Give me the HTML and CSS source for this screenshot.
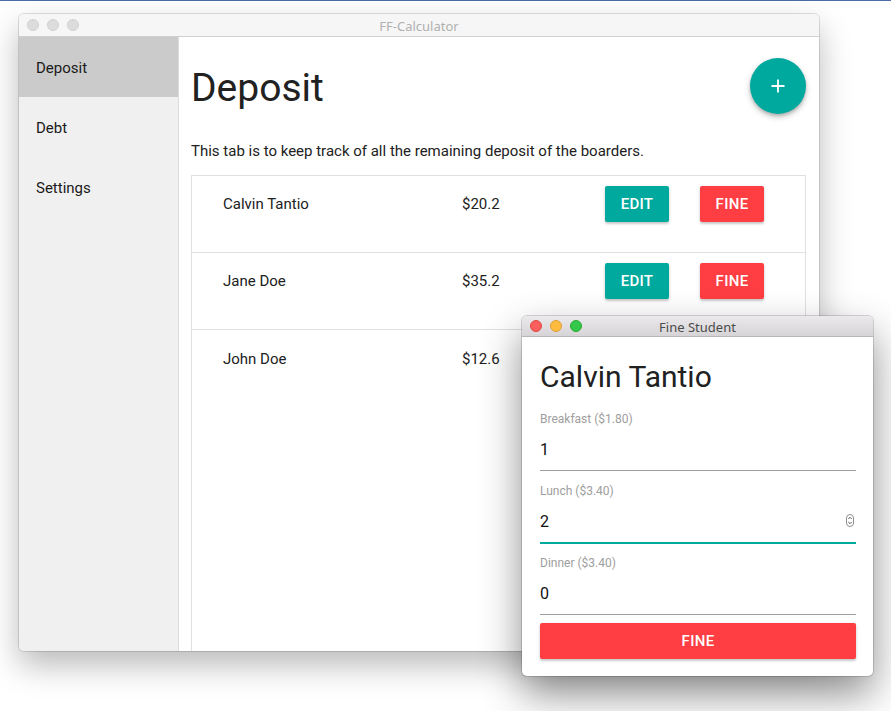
FILE: index.html
```html
<!DOCTYPE html>
<html>
<head>
<meta charset="utf-8">
<title>FF-Calculator</title>
<link rel="stylesheet" href="styles.css">
</head>
<body>
<div class="topline"></div>

<div class="window main-window">
  <div class="titlebar inactive">
    <div class="lights">
      <span class="light"></span><span class="light"></span><span class="light"></span>
    </div>
    <div class="title">FF-Calculator</div>
  </div>
  <div class="app">
    <nav class="sidebar">
      <div class="nav-item active">Deposit</div>
      <div class="nav-item">Debt</div>
      <div class="nav-item">Settings</div>
    </nav>
    <main class="content">
      <div class="header">
        <h1 class="page-title">Deposit</h1>
        <button class="fab" aria-label="Add">
          <svg width="16" height="16" viewBox="0 0 16 16"><path d="M8 1.5v13M1.5 8h13" stroke="#fff" stroke-width="1.8" fill="none"/></svg>
        </button>
      </div>
      <p class="desc">This tab is to keep track of all the remaining deposit of the boarders.</p>
      <div class="table">
        <div class="row">
          <span class="name">Calvin Tantio</span>
          <span class="amount">$20.2</span>
          <span class="actions"><button class="btn edit">EDIT</button><button class="btn fine">FINE</button></span>
        </div>
        <div class="row">
          <span class="name">Jane Doe</span>
          <span class="amount">$35.2</span>
          <span class="actions"><button class="btn edit">EDIT</button><button class="btn fine">FINE</button></span>
        </div>
        <div class="row last">
          <span class="name">John Doe</span>
          <span class="amount">$12.6</span>
          <span class="actions covered"><button class="btn edit">EDIT</button><button class="btn fine">FINE</button></span>
        </div>
      </div>
    </main>
  </div>
</div>

<div class="window dialog">
  <div class="titlebar active-bar">
    <div class="lights">
      <span class="light red"></span><span class="light yellow"></span><span class="light green"></span>
    </div>
    <div class="title">Fine Student</div>
  </div>
  <div class="dialog-body">
    <h2 class="student">Calvin Tantio</h2>
    <div class="field">
      <label class="label">Breakfast ($1.80)</label>
      <div class="input">1</div>
    </div>
    <div class="field">
      <label class="label">Lunch ($3.40)</label>
      <div class="input focused">2
        <svg class="spin" width="8" height="13" viewBox="0 0 8 13"><rect x="0.5" y="0.5" width="7" height="12" rx="3.5" fill="#fff" stroke="#8f8f8f"/><path d="M2.3 5l1.7-1.7 1.7 1.7M2.3 8l1.7 1.7 1.7-1.7" stroke="#444" stroke-width="0.9" fill="none"/></svg>
      </div>
    </div>
    <div class="field">
      <label class="label">Dinner ($3.40)</label>
      <div class="input">0</div>
    </div>
    <button class="btn fine wide">FINE</button>
  </div>
</div>
</body>
</html>
```

FILE: styles.css
```css
* { box-sizing: border-box; }
html, body { margin: 0; padding: 0; }
body {
  width: 891px;
  height: 711px;
  background: #ffffff;
  font-family: Roboto, "Liberation Sans", sans-serif;
  color: #212121;
  position: relative;
  overflow: hidden;
}
.topline { height: 1px; background: #4a6da7; }

.window {
  position: absolute;
  background: #fff;
  border-radius: 5px;
  overflow: hidden;
  display: flex;
  flex-direction: column;
}
.main-window {
  left: 19px; top: 14px; width: 800px; height: 637px;
  box-shadow: 0 0 0 1px rgba(0,0,0,0.12), 0 14px 32px rgba(0,0,0,0.28);
}
.dialog {
  left: 522px; top: 316px; width: 351px; height: 360px;
  box-shadow: 0 0 0 1px rgba(0,0,0,0.15), 0 18px 40px rgba(0,0,0,0.45);
}

.titlebar {
  position: relative;
  display: flex;
  align-items: center;
  flex: none;
  font-family: "Noto Sans", "Liberation Sans", sans-serif;
  font-size: 13px;
}
.titlebar.inactive {
  height: 23px;
  background: #f6f6f6;
  border-bottom: 1px solid #cfcfcf;
  color: #b0b0b0;
}
.titlebar.active-bar {
  height: 21px;
  background: linear-gradient(#ebe9eb, #d6d4d6);
  border-bottom: 1px solid #b8b6b8;
  color: #4b4b4b;
}
.lights { display: flex; gap: 8px; padding-left: 8px; }
.light {
  width: 12px; height: 12px; border-radius: 50%;
  background: #dcdcdc; border: 1px solid #d0d0d0;
}
.light.red { background: #fc605c; border-color: #df4744; }
.light.yellow { background: #fdbc40; border-color: #de9f34; }
.light.green { background: #34c84a; border-color: #27aa35; }
.title {
  position: absolute; left: 0; right: 0; text-align: center;
  padding-top: 1px;
  pointer-events: none;
}

.app { flex: 1; display: flex; min-height: 0; }
.sidebar {
  width: 160px; flex: none;
  background: #f0f0f0;
  border-right: 1px solid #dcdcdc;
}
.nav-item {
  height: 60px;
  display: flex; align-items: center;
  padding-left: 17px;
  padding-top: 2px;
  font-size: 15px;
  color: #1a1a1a;
}
.nav-item.active { background: #cbcbcb; }

.content {
  flex: 1;
  display: flex; flex-direction: column;
  padding: 21px 13px 0 12px;
  min-width: 0;
}
.header { display: flex; align-items: center; justify-content: space-between; }
.page-title {
  margin: 4px 0 0;
  font-size: 39px;
  font-weight: 400;
  line-height: 48px;
  color: #212121;
}
.fab {
  width: 56px; height: 56px; border-radius: 50%;
  border: none; padding: 0;
  background: #00a99d;
  display: flex; align-items: center; justify-content: center;
  box-shadow: 0 3px 6px rgba(0,0,0,0.22), 0 2px 3px rgba(0,0,0,0.15);
}
.desc {
  margin: 27px 0 14px;
  font-size: 15px;
  line-height: 20px;
  color: #212121;
}
.table {
  flex: 1;
  border: 1px solid #e0e0e0;
  border-bottom: none;
}
.row {
  height: 77px;
  display: flex;
  align-items: center;
  padding: 10px 0 30px 31px;
  border-bottom: 1px solid #e0e0e0;
  font-size: 15px;
  color: #212121;
}
.row.last { border-bottom: none; }
.name { width: 239px; }
.amount { width: 143px; }
.actions { display: flex; gap: 31px; }
.actions.covered { visibility: hidden; }

.btn {
  border: none;
  border-radius: 2px;
  height: 36px;
  width: 64px;
  font-family: Roboto, "Liberation Sans", sans-serif;
  font-size: 15px;
  font-weight: 500;
  letter-spacing: 0.3px;
  color: #fff;
  padding: 0;
  box-shadow: 0 2px 2px rgba(0,0,0,0.14), 0 1px 4px rgba(0,0,0,0.12);
}
.btn.edit { background: #00a99d; }
.btn.fine { background: #fe3e42; }
.btn.wide { width: 100%; margin-top: 8px; }

.dialog-body {
  flex: 1;
  padding: 22px 17px 16px 18px;
  display: flex; flex-direction: column;
}
.student {
  margin: 0 0 16px;
  font-size: 30px;
  font-weight: 400;
  line-height: 36px;
  color: #212121;
}
.field { display: flex; flex-direction: column; }
.field + .field { margin-top: 12px; }
.label {
  font-size: 12px;
  line-height: 16px;
  color: #9e9e9e;
}
.input {
  position: relative;
  height: 44px;
  display: flex; align-items: center;
  padding-top: 1px;
  font-size: 16px;
  color: #111;
  border-bottom: 1px solid #9e9e9e;
}
.input.focused {
  border-bottom-color: #00a99d;
  box-shadow: 0 1px 0 #00a99d;
}
.spin { position: absolute; right: 2px; top: 15px; }
```
